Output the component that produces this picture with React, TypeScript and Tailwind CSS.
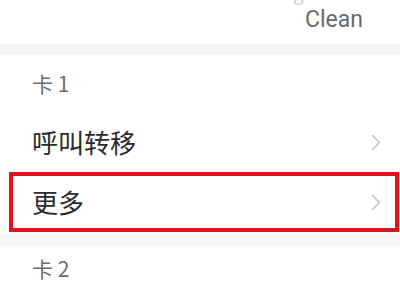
import React from 'react';

const Chevron = () => (
  <svg width="10" height="17" viewBox="0 0 10 17" fill="none" className="shrink-0">
    <path d="M1.5 1.5 L8.5 8.5 L1.5 15.5" stroke="#bdbdbd" strokeWidth="1.4" strokeLinecap="round" strokeLinejoin="round" />
  </svg>
);

const Row = ({ label, highlight }: { label: string; highlight?: boolean }) => (
  <div
    className={`flex items-center justify-between h-[60px] ${
      highlight ? 'ml-[9px] mr-[1px] border-[4px] border-[#e0121b] pl-[19px] pr-[14px]' : 'pl-[32px] mr-[1px] pr-[18px]'
    }`}
  >
    <span className="text-[26px] leading-none text-[#2b2b2b]">{label}</span>
    <Chevron />
  </div>
);

export default function App() {
  const font = { fontFamily: '"Noto Sans CJK SC", "Noto Sans", sans-serif' };
  return (
    <div className="w-[400px] h-[300px] overflow-hidden bg-white" style={font}>
      <div className="h-[44px] overflow-hidden flex flex-col items-end pr-[37px]">
        <div className="-mt-[19px] h-[22px] text-[19px] leading-[22px] text-[#cfcfcf] tracking-wide">
          Mobile data usage Auto
        </div>
        <div className="mt-[4px] text-[23px] leading-[26px] text-[#6a6a6a]" style={{ fontFamily: 'Roboto, sans-serif' }}>
          Clean
        </div>
      </div>
      <div className="h-[11px] bg-[#f4f4f4]" />
      <div className="bg-white">
        <div className="h-[57px] flex items-center pl-[32px] text-[21px] text-[#6b6b6b]">卡 1</div>
        <Row label="呼叫转移" />
        <Row label="更多" highlight />
        <div className="h-[2px]" />
      </div>
      <div className="h-[12px] bg-[#f7f7f7]" />
      <div className="h-[46px] flex items-center pl-[32px] text-[21px] text-[#6b6b6b]">卡 2</div>
    </div>
  );
}
